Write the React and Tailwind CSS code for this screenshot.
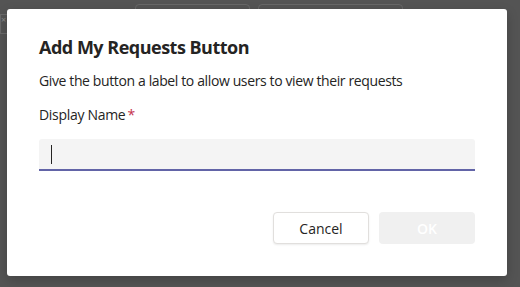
export default function App() {
  return (
    <div
      className="relative w-[520px] h-[287px] overflow-hidden bg-[#545454]"
      style={{ fontFamily: '"Open Sans", "Noto Sans", sans-serif' }}
    >
      {/* page behind the overlay */}
      <div className="absolute left-0 top-[14px] w-[8px] h-[20px] border border-[#6a6a6a] text-[9px] leading-[10px] text-[#8a8a8a]">
        ×
      </div>
      <div className="absolute left-0 top-[33px] w-[8px] h-px bg-[#6a6a6a]" />
      <div className="absolute left-[135px] top-[4px] w-[115px] h-[12px] rounded-[4px] border border-[#686868]" />
      <div className="absolute left-[258px] top-[4px] w-[145px] h-[12px] rounded-[4px] border border-[#686868]" />

      {/* dialog */}
      <div className="absolute left-[7px] top-[9px] w-[500px] h-[267px] bg-white rounded-[3px] shadow-[0_4px_12px_rgba(0,0,0,0.2)] px-[32px] pt-[26px] flex flex-col">
        <h2 className="text-[18px] leading-[24px] font-bold tracking-[-0.5px] text-[#252423]">
          Add My Requests Button
        </h2>
        <p className="mt-[12px] text-[14px] leading-[20px] tracking-[-0.38px] text-[#252423]">
          Give the button a label to allow users to view their requests
        </p>
        <label className="mt-[14px] text-[14px] leading-[20px] tracking-[-0.3px] text-[#252423]">
          Display Name<span className="text-[#c4314b] ml-[2px]">*</span>
        </label>
        <div className="mt-[14px] h-[32px] shrink-0 bg-[#f4f4f4] rounded-t-[3px] border-b-2 border-[#6264a7] flex items-center px-[12px]">
          <span className="w-px h-[19px] bg-[#252423]" />
        </div>
        <div className="mt-[41px] flex justify-end gap-[10px]">
          <button className="w-[96px] h-[32px] rounded-[4px] border border-[#e1dfdd] bg-white text-[14px] font-medium text-[#252423] shadow-[0_1px_2px_rgba(0,0,0,0.08)]">
            Cancel
          </button>
          <button className="w-[96px] h-[32px] rounded-[4px] bg-[#f0f0f0] text-[14px] font-semibold text-white">
            OK
          </button>
        </div>
      </div>
    </div>
  );
}
